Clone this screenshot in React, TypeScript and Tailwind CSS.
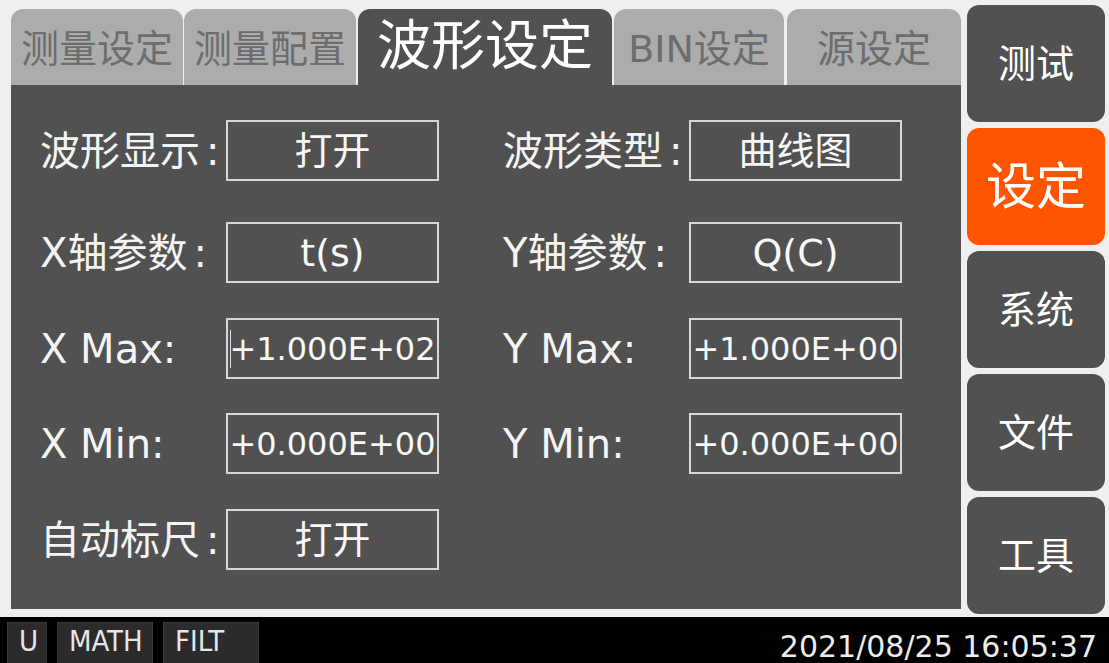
import React from "react";

type Field = {
  label: string;
  value: string;
  size: "cjk" | "num";
  cursor?: boolean;
};

const TABS = [
  { name: "测量设定", width: "w-[172px]", gap: "mr-[1px]" },
  { name: "测量配置", width: "w-[172px]", gap: "mr-[2px]" },
  { name: "波形设定", width: "w-[254px]", gap: "mr-[2px]", active: true },
  { name: "BIN设定", width: "w-[170px]", gap: "mr-[3px]" },
  { name: "源设定", width: "w-[174px]", gap: "" }
];

const ROWS: { gap: string; left: Field; right?: Field }[] = [
  {
    gap: "mt-[35px]",
    left: { label: "波形显示:", value: "打开", size: "cjk" },
    right: { label: "波形类型:", value: "曲线图", size: "cjk" }
  },
  {
    gap: "mt-[41px]",
    left: { label: "X轴参数:", value: "t(s)", size: "cjk" },
    right: { label: "Y轴参数:", value: "Q(C)", size: "cjk" }
  },
  {
    gap: "mt-[35px]",
    left: { label: "X Max:", value: "+1.000E+02", size: "num", cursor: true },
    right: { label: "Y Max:", value: "+1.000E+00", size: "num" }
  },
  {
    gap: "mt-[34px]",
    left: { label: "X Min:", value: "+0.000E+00", size: "num" },
    right: { label: "Y Min:", value: "+0.000E+00", size: "num" }
  },
  {
    gap: "mt-[35px]",
    left: { label: "自动标尺:", value: "打开", size: "cjk" }
  }
];

const MENU = [
  { name: "测试" },
  { name: "设定", active: true },
  { name: "系统" },
  { name: "文件" },
  { name: "工具" }
];

const FLAGS = [
  { name: "U", width: "w-[40px]" },
  { name: "MATH", width: "w-[96px]" },
  { name: "FILT", width: "w-[96px]" }
];

const hasCjk = (s: string) => /[\u4e00-\u9fff]/.test(s);

function FieldCell({ field }: { field: Field }) {
  // the chinese labels sit their colon right against the box
  const cjk = hasCjk(field.label);
  const text = field.label.replace(/:$/, "");

  return (
    <>
      <div className="w-[186px] text-[40px] leading-none text-[#f4f4f4] whitespace-nowrap">
        {text}
        <span className={cjk ? "ml-[6px]" : ""}>:</span>
      </div>
      <div className="relative w-[213px] h-[61px] border-2 border-[#d6d6d6] flex items-center justify-center text-[#f8f8f8] whitespace-nowrap">
        {field.cursor && (
          <span className="absolute left-[2px] top-[10px] w-[1px] h-[38px] bg-[#e0e0e0]" />
        )}
        <span
          className={
            field.size === "num"
              ? "text-[32px] leading-none"
              : "text-[38px] leading-none"
          }
        >
          {field.value}
        </span>
      </div>
    </>
  );
}

export default function App() {
  return (
    <div className="w-[1109px] h-[663px] bg-[#efefef] flex flex-col overflow-hidden font-['DejaVu_Sans','Noto_Sans_CJK_SC',sans-serif]">
      <div className="flex h-[617px]">
        {/* main panel */}
        <div className="ml-[11px] mt-[9px] w-[950px] flex flex-col">
          <div className="flex h-[76px]">
            {TABS.map((tab) => (
              <div
                key={tab.name}
                className={`${tab.width} ${tab.gap} h-full rounded-t-[12px] flex items-center justify-center whitespace-nowrap leading-none ${
                  tab.active
                    ? "bg-[#515151] text-white text-[54px]"
                    : "bg-[#acacac] text-[#6d6d6d] text-[38px] pt-[4px]"
                }`}
              >
                {tab.name}
              </div>
            ))}
          </div>

          <div className="h-[524px] bg-[#515151] pl-[29px] flex flex-col">
            {ROWS.map((row, i) => (
              <div key={i} className={`${row.gap} flex items-center h-[61px]`}>
                <FieldCell field={row.left} />
                {row.right && (
                  <>
                    <div className="w-[64px]" />
                    <FieldCell field={row.right} />
                  </>
                )}
              </div>
            ))}
          </div>
        </div>

        {/* right menu */}
        <div className="ml-[6px] mt-[5px] w-[138px] flex flex-col gap-[6px]">
          {MENU.map((item) => (
            <div
              key={item.name}
              className={`h-[117px] rounded-[12px] flex items-center justify-center text-white leading-none ${
                item.active ? "bg-[#ff5500] text-[50px]" : "bg-[#515151] text-[38px]"
              }`}
            >
              {item.name}
            </div>
          ))}
        </div>
      </div>

      {/* status bar */}
      <div className="h-[46px] bg-black flex overflow-hidden">
        <div className="flex gap-[10px] pl-[7px] pt-[5px]">
          {FLAGS.map((flag) => (
            <div
              key={flag.name}
              className={`${flag.width} h-[41px] bg-[#2b2b2b] border border-[#3a3a3a] border-b-0 pl-[11px] pt-[4px] text-[29px] leading-[29px] text-[#e6e6e6] font-['DejaVu_Sans_Condensed','DejaVu_Sans',sans-serif] [font-stretch:condensed]`}
            >
              {flag.name}
            </div>
          ))}
        </div>
        <div className="ml-auto pr-[12px] pt-[15px] text-[30px] leading-[30px] text-[#ececec] whitespace-nowrap">
          2021/08/25 16:05:37
        </div>
      </div>
    </div>
  );
}
